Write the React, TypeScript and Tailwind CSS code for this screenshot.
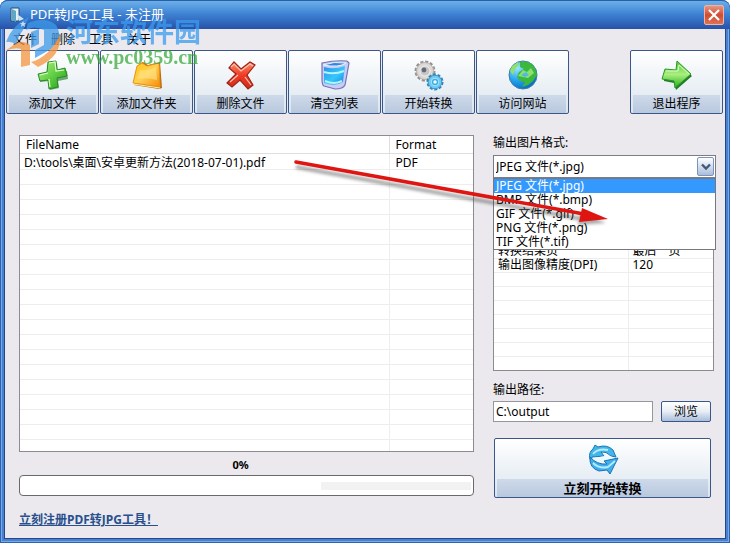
import { ReactNode, useState } from "react";

interface FileEntry {
  name: string;
  format: string;
}

interface ToolButtonProps {
  label: string;
  children: ReactNode;
}

const MENU = ["文件", "删除", "工具", "关于"];
const FORMATS = ["JPEG 文件(*.jpg)", "BMP 文件(*.bmp)", "GIF 文件(*.gif)", "PNG 文件(*.png)", "TIF 文件(*.tif)"];
const FILES: FileEntry[] = [{ name: "D:\\tools\\桌面\\安卓更新方法(2018-07-01).pdf", format: "PDF" }];
const EMPTY_FILE_ROWS = 18;
const OPTIONS = [
  ["", ""],
  ["", ""],
  ["", ""],
  ["转换结果页", "最后一页"],
  ["输出图像精度(DPI)", "120"],
  ["", ""],
  ["", ""],
  ["", ""],
  ["", ""],
  ["", ""],
  ["", ""],
  ["", ""],
];

function AddIcon() {
  return (
    <svg viewBox="0 0 32 32" className="size-8">
      <defs>
        <linearGradient id="plus" x1="0" y1="0" x2="1" y2="1">
          <stop offset="0" stopColor="#b4f28c" />
          <stop offset="0.5" stopColor="#62cf45" />
          <stop offset="1" stopColor="#1f9a1c" />
        </linearGradient>
      </defs>
      <path d="M13 31 22 29 21 22 31 20 30 12 21 13 20 4 12 5 12 14 3 16 3 23 12 22z" fill="#176f18" opacity=".6" />
      <path d="M11 3 19 2 20 11 28 9 30 17 20 19 21 28 12 30 11 21 3 22 1 15 10 13z" fill="url(#plus)" stroke="#268c24" />
      <path d="M12 4 18 3 19 12 27 11M3 16 11 14M12 20 13 28" fill="none" stroke="#dcffc4" strokeWidth="1.2" />
    </svg>
  );
}

function FolderIcon() {
  return (
    <svg viewBox="0 0 32 32" className="size-8">
      <defs>
        <linearGradient id="folder" x1="0" y1="0" x2="1" y2="1">
          <stop offset="0" stopColor="#ffc60e" />
          <stop offset="0.5" stopColor="#ffcf55" />
          <stop offset="1" stopColor="#f58a05" />
        </linearGradient>
      </defs>
      <path d="M3 26 8 5 12 3 17 6 29 3 31 29 28 30z" fill="#b96c15" />
      <path d="M2 24 6 7 11 4 16 7 28 4 29 28z" fill="url(#folder)" stroke="#e99310" />
      <path d="M9 11Q18 12 25 8L26 21Q16 18 6 20z" fill="#ffe98e" opacity=".55" />
      <path d="M2 25 29 29" stroke="#fff0a1" />
    </svg>
  );
}

function DeleteIcon() {
  return (
    <svg viewBox="0 0 32 32" className="size-8">
      <defs>
        <linearGradient id="cross" x1="0" y1="0" x2="0" y2="1">
          <stop offset="0" stopColor="#ff8a67" />
          <stop offset="0.5" stopColor="#ee3b25" />
          <stop offset="1" stopColor="#d62818" />
        </linearGradient>
      </defs>
      <path d="M4 9 9 3 16 10 25 3 30 6 22 16 28 26 23 30 15 21 7 28 2 24 11 15z" fill="url(#cross)" stroke="#98251a" strokeWidth="1.2" />
      <path d="M6 8 9 5 16 12 25 5 28 7M5 23 13 16M20 18 26 26" fill="none" stroke="#ffc2ad" strokeWidth="1.2" />
    </svg>
  );
}

function BinIcon() {
  return (
    <svg viewBox="0 0 32 32" className="size-8">
      <defs>
        <linearGradient id="bin" x1="0" y1="0" x2="1" y2="1">
          <stop offset="0" stopColor="#2f8fe8" />
          <stop offset="0.55" stopColor="#35c7fb" />
          <stop offset="1" stopColor="#217ee4" />
        </linearGradient>
      </defs>
      <path d="M3 4Q16 1 28 2L30 4 26 26Q24 30 16 30L5 27Q3 26 3 20z" fill="#c9cdf3" stroke="#7771b9" strokeWidth="1.2" />
      <path d="M5 8Q15 11 26 7L24 23Q16 28 5 24z" fill="url(#bin)" />
      <path d="M4 6Q15 2 27 4 20 9 4 6" fill="#3485dc" stroke="#e9f4ff" />
      <path d="M5 13Q15 16 25 12M6 22Q15 26 23 22" fill="none" stroke="#b4f4ff" strokeWidth="2" />
    </svg>
  );
}

function GearsIcon() {
  return (
    <svg viewBox="0 0 32 32" className="size-8">
      <circle cx="12" cy="12" r="9" fill="none" stroke="#96918e" strokeWidth="3" strokeDasharray="3 1.7" />
      <circle cx="12" cy="12" r="8.5" fill="#dcdad8" stroke="#b5b0ac" />
      <circle cx="12" cy="12" r="5" fill="#c8c5c2" stroke="#eee" />
      <circle cx="11" cy="11" r="2.4" fill="#5f6b78" />
      <circle cx="22" cy="23" r="7" fill="none" stroke="#2d83b8" strokeWidth="3" strokeDasharray="2.8 1.6" />
      <circle cx="22" cy="23" r="6.8" fill="#72c8ef" stroke="#3a9ccd" />
      <circle cx="22" cy="23" r="3.8" fill="#3aabe0" stroke="#a3e9ff" />
      <circle cx="22" cy="23" r="1.8" fill="#edfaff" />
    </svg>
  );
}

function GlobeIcon() {
  return (
    <svg viewBox="0 0 32 32" className="size-8">
      <defs>
        <radialGradient id="globe" cx=".3" cy=".25" r=".8">
          <stop offset="0" stopColor="#9ce5ff" />
          <stop offset="0.55" stopColor="#25a5ee" />
          <stop offset="1" stopColor="#086cc5" />
        </radialGradient>
      </defs>
      <circle cx="16" cy="16" r="14" fill="url(#globe)" stroke="#427ba4" />
      <path d="M13 3Q23 1 28 9L30 16 26 22 21 26 15 28 18 23 13 22 10 18 12 13 17 10 13 8z" fill="#3bb83d" />
      <path d="M3 12 5 7 11 3 12 6 8 10 6 16zM11 17 16 11 20 13 24 9 27 14 21 19z" fill="#8be06f" />
      <path d="M14 16 19 13 22 16 18 18z" fill="#4db9ea" />
    </svg>
  );
}

function ExitIcon() {
  return (
    <svg viewBox="0 0 32 32" className="size-8">
      <defs>
        <linearGradient id="exit" x1="0" y1="0" x2="0" y2="1">
          <stop offset="0" stopColor="#55c93c" />
          <stop offset="0.5" stopColor="#a9ee7f" />
          <stop offset="1" stopColor="#20ae16" />
        </linearGradient>
      </defs>
      <path d="M4 12 16 11 17 4 31 17 15 31 13 24 3 22z" fill="#237c23" />
      <path d="M4 10 15 11 16 2 30 15 14 29 13 22 1 20z" fill="url(#exit)" stroke="#299728" />
      <path d="M5 12 17 12 18 6 28 15" fill="none" stroke="#d4ffba" />
    </svg>
  );
}

function ConvertIcon() {
  return (
    <svg viewBox="0 0 32 32" className="size-8">
      <path d="M4 18C1 13 3 8 6 6L8 2 11 4Q20 1 26 7L29 14 24 13Q19 8 14 9L17 13 5 14z" fill="#42b5e9" stroke="#1878b9" />
      <path d="M3 14Q2 25 12 28L20 27 23 31 31 15 17 18 20 21Q10 22 3 14z" fill="#40aeea" stroke="#1773b4" />
      <path d="M7 15 18 13 25 13 17 17Q11 18 7 15z" fill="#e8f9ff" />
      <path d="M6 11Q11 5 21 7M6 20Q12 26 21 24L28 18" fill="none" stroke="#b4ecff" strokeWidth="1.8" />
    </svg>
  );
}

function ToolButton({ label, children }: ToolButtonProps) {
  return (
    <button
      type="button"
      className="flex h-16 w-[93px] flex-col items-center rounded-xs border border-[#3b5688] bg-linear-to-b from-white to-[#dbe5ee] px-0.5 pt-1"
    >
      <span className="flex h-10 shrink-0 items-center">{children}</span>
      <span className="w-full bg-linear-to-b from-[#ceDAea] to-[#b9c8de] leading-[18px]">{label}</span>
    </button>
  );
}

function FileTable() {
  return (
    <table className="w-full table-fixed border-collapse bg-white text-left">
      <thead>
        <tr className="h-[17px] border-b border-[#dedede]">
          <th className="border-r border-[#dedede] pl-1.5 pt-0.5 font-normal leading-[14px]">FileName</th>
          <th className="w-[84px] pl-1.5 pt-0.5 font-normal leading-[14px]">Format</th>
        </tr>
      </thead>
      <tbody>
        {FILES.map((file) => (
          <tr key={file.name} className="h-4 border-b border-[#ededed]">
            <td className="whitespace-nowrap border-r border-[#ededed] pl-1 pt-0.5 leading-[13px]">{file.name}</td>
            <td className="pl-1.5 pt-0.5 leading-[13px]">{file.format}</td>
          </tr>
        ))}
        {Array.from({ length: EMPTY_FILE_ROWS }, (_, index) => (
          <tr key={index} className="h-[15px] border-b border-[#ededed]">
            <td className="border-r border-[#ededed]" />
            <td />
          </tr>
        ))}
        <tr className="h-3">
          <td className="border-r border-[#ededed]" />
          <td />
        </tr>
      </tbody>
    </table>
  );
}

function OptionTable() {
  return (
    <table className="w-full table-fixed border-collapse bg-white text-left">
      <thead>
        <tr className="h-[23px] border-b border-[#ededed]">
          <th className="w-[134px] border-r border-[#ededed]" />
          <th />
        </tr>
      </thead>
      <tbody>
        {OPTIONS.map(([name, value], index) => (
          <tr key={index} className="h-3.5 border-b border-[#ededed] last:border-b-0">
            <td className="whitespace-nowrap border-r border-[#ededed] pl-1 leading-3">{name}</td>
            <td className="pl-1 leading-3">{value}</td>
          </tr>
        ))}
      </tbody>
    </table>
  );
}

function FormatPicker() {
  const [format, setFormat] = useState(FORMATS[0]);

  return (
    <div className="relative">
      <div className="relative">
        <select
          id="format"
          value={format}
          onChange={(event) => setFormat(event.target.value)}
          className="h-[23px] w-full appearance-none border border-[#7c7c84] bg-white pl-0.5"
        >
          {FORMATS.map((item) => (
            <option key={item}>{item}</option>
          ))}
        </select>
        <span className="pointer-events-none absolute right-0.5 top-0.5 flex h-[19px] w-[17px] items-center justify-center rounded-xs border border-[#7c94bb] bg-linear-to-b from-white to-[#a9bddb]">
          <svg viewBox="0 0 10 8" className="h-2 w-2.5">
            <path d="M1 1.5 5 5.5 9 1.5" fill="none" stroke="#405879" strokeWidth="2.4" />
          </svg>
        </span>
      </div>
      <ul
        role="listbox"
        aria-label="输出图片格式"
        className="absolute inset-x-0 top-full z-10 border border-[#77777d] bg-white"
      >
        {FORMATS.map((item) => (
          <li
            key={item}
            role="option"
            aria-selected={item === format}
            onClick={() => setFormat(item)}
            className="h-3.5 pl-0.5 leading-[14px] aria-selected:bg-[#3399ff] aria-selected:text-white"
          >
            {item}
          </li>
        ))}
      </ul>
    </div>
  );
}

function Watermark() {
  return (
    <div className="pointer-events-none absolute left-1 top-4 z-20 flex opacity-75">
      <svg viewBox="0 0 62 52" className="h-[52px] w-[62px]">
        <path d="M2 26Q8 9 25 1L19 14Q13 22 13 29 7 25 2 26z" fill="#3d9bea" />
        <path d="M24 7Q42 0 52 9 60 22 49 32L31 42V34L40 29V14Q30 9 22 14z" fill="#3d9bea" />
        <path d="M27 16 35 13V28L27 32z" fill="#3d9bea" />
        <path d="M1 35 11 28Q18 23 26 29V49L17 51V33Q10 31 1 35z" fill="#f3943d" />
        <path d="M27 46Q44 42 56 19 58 40 34 51z" fill="#f3943d" />
        <path d="M19 5 20 7H22L20.500 8.500 21 11 19 9.500 17 11 17.500 8.500 16 7H18z" fill="white" />
      </svg>
      <div className="flex flex-col">
        <span className="text-[27px] font-bold leading-8 text-[#3a9cf0]">河东软件园</span>
        <span className="font-['Liberation_Serif',serif] text-xl font-bold leading-[18px] text-[#3aaa3c]">www.pc0359.cn</span>
      </div>
    </div>
  );
}

export default function App() {
  const [output, setOutput] = useState("C:\\output");

  return (
    <div className="relative flex min-h-screen flex-col overflow-hidden rounded-t-lg bg-[#4a80cf] font-['Noto_Sans','Noto_Sans_CJK_SC',sans-serif] text-xs text-black shadow-[inset_0_0_0_1px_#2c62b4,inset_0_0_0_2px_#78aae6]">
      <header className="flex h-[29px] items-center gap-1 rounded-t-lg border-t border-[#285fa8] bg-linear-to-b from-[#6bb0e8] via-[#3c7fd2] to-[#2752a8] pl-2.5 pr-1.5 text-white">
        <svg viewBox="0 0 16 16" className="size-4">
          <path d="M1 1H9V14H1z" fill="#e5f4fa" stroke="#294c70" />
          <path d="M2 2 6 4V15L2 13z" fill="#5fa7c6" />
          <path d="M7 7 14 12 9 14z" fill="#cce3ea" />
        </svg>
        <h1 className="grow text-[13px]">PDF转JPG工具 - 未注册</h1>
        <button
          type="button"
          aria-label="关闭"
          className="flex size-5 items-center justify-center rounded-xs border border-[#f2b3a5] bg-linear-to-b from-[#e7967f] via-[#cf4b31] to-[#e07150]"
        >
          <svg viewBox="0 0 12 12" className="size-3">
            <path d="M1 1 11 11M11 1 1 11" stroke="white" strokeWidth="2.2" />
          </svg>
        </button>
      </header>

      <div className="mx-1 mb-1 flex grow flex-col border border-t-0 border-[#24468a] bg-[#ebe9ed]">
        <nav className="flex h-[21px] gap-3.5 pl-2">
          {MENU.map((item) => (
            <button key={item} type="button" className="leading-5">
              {item}
            </button>
          ))}
        </nav>

        <div className="flex justify-between pl-px pr-0.5">
          <div className="flex gap-px">
            <ToolButton label="添加文件"><AddIcon /></ToolButton>
            <ToolButton label="添加文件夹"><FolderIcon /></ToolButton>
            <ToolButton label="删除文件"><DeleteIcon /></ToolButton>
            <ToolButton label="清空列表"><BinIcon /></ToolButton>
            <ToolButton label="开始转换"><GearsIcon /></ToolButton>
            <ToolButton label="访问网站"><GlobeIcon /></ToolButton>
          </div>
          <ToolButton label="退出程序"><ExitIcon /></ToolButton>
        </div>

        <main className="flex gap-[19px] pl-3.5 pr-[9px] pt-[21px]">
          <section className="min-w-0 grow">
            <div className="border border-[#8b8b91]">
              <FileTable />
            </div>
            <p className="h-[23px] pr-3 text-center text-[11px] font-bold leading-[26px]">0%</p>
            <div
              role="progressbar"
              aria-label="转换进度"
              aria-valuenow={0}
              className="flex h-[21px] items-center justify-end rounded-sm border border-[#69696d] bg-white pr-0.5"
            >
              <span className="h-2 w-1/3 bg-[#f2f2f2]" />
            </div>
            <a href="#register" className="mt-3.5 inline-block font-bold leading-5 text-[#284f8e] underline">
              立刻注册PDF转JPG工具！
            </a>
          </section>

          <section className="w-[223px] shrink-0">
            <label htmlFor="format" className="block h-5 leading-4">输出图片格式:</label>
            <FormatPicker />
            <div className="mr-0.5 border border-[#8b8b91]">
              <OptionTable />
            </div>
            <label htmlFor="output" className="mt-2 block leading-[22px]">输出路径:</label>
            <div className="flex gap-2 pr-[5px]">
              <input
                id="output"
                value={output}
                onChange={(event) => setOutput(event.target.value)}
                className="h-[21px] min-w-0 grow border border-[#96969c] bg-white pl-0.5"
              />
              <button
                type="button"
                className="h-[21px] w-[50px] shrink-0 rounded-xs border border-[#3b5688] bg-linear-to-b from-white via-[#e7eef4] to-[#a9bddb] leading-[18px]"
              >
                浏览
              </button>
            </div>
            <button
              type="button"
              className="ml-px mt-4 flex h-[60px] w-[217px] flex-col items-center rounded-xs border border-[#3b5688] bg-linear-to-b from-white to-[#dbe5ee] px-0.5 text-[13px] font-bold"
            >
              <span className="flex h-10 shrink-0 items-center"><ConvertIcon /></span>
              <span className="w-full bg-linear-to-b from-[#ceDAea] to-[#b9c8de] leading-[18px]">立刻开始转换</span>
            </button>
          </section>
        </main>
      </div>

      <svg viewBox="0 0 320 74" className="pointer-events-none absolute left-[292px] top-[156px] z-20 h-[74px] w-80">
        <defs>
          <filter id="soft" x="-10%" y="-20%" width="120%" height="150%">
            <feGaussianBlur stdDeviation="1.6" />
          </filter>
        </defs>
        <g filter="url(#soft)" opacity=".45">
          <path d="M4 11 290 63" stroke="#444" strokeWidth="4" />
          <path d="M288 56 314 67 286 69z" fill="#444" />
        </g>
        <path d="M4 6 292 58" stroke="#df1511" strokeWidth="3.5" strokeLinecap="round" />
        <path d="M290 52 316 63 287 66z" fill="#df1511" />
      </svg>
      <Watermark />
    </div>
  );
}
